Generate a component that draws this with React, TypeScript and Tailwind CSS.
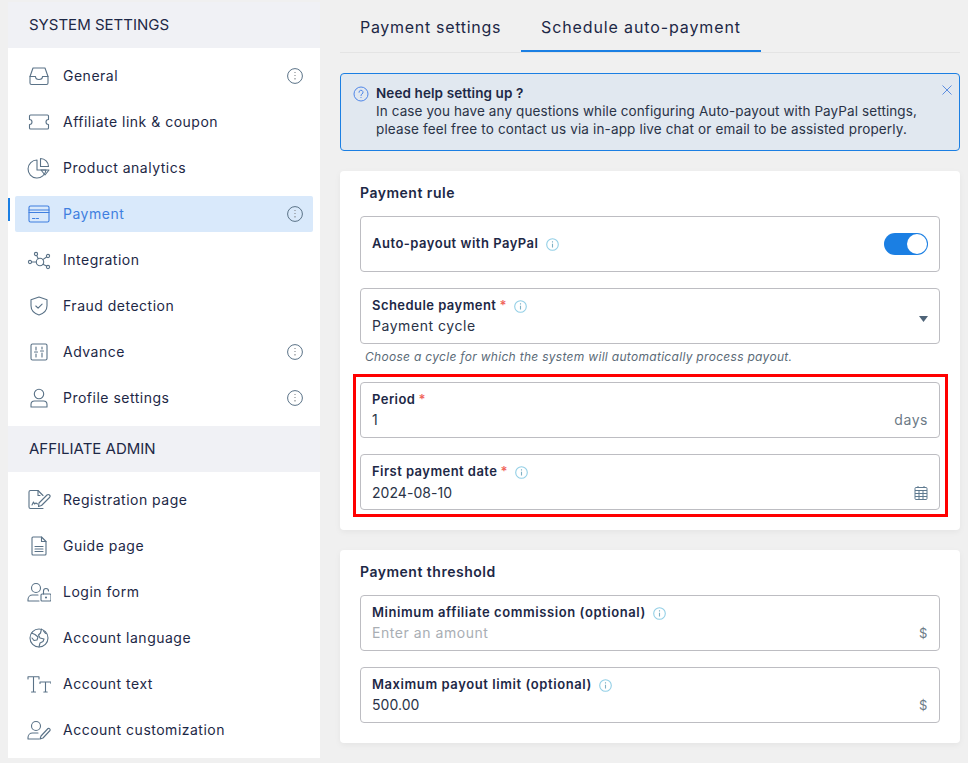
import type { ReactNode } from "react";

const Stroke = ({ children }: { children: ReactNode }) => (
  <svg width="24" height="24" viewBox="0 0 24 24" fill="none" stroke="#5a7287" strokeWidth="1.1" strokeLinecap="round" strokeLinejoin="round">
    {children}
  </svg>
);

const icons: Record<string, ReactNode> = {
  general: (
    <Stroke>
      <path d="M6 4h12l3 8.500v6.500a1.500 1.500 0 0 1-1.500 1.500h-15A1.500 1.500 0 0 1 3 19v-6.500z" />
      <path d="M3 12.500h5.500a3.500 3 0 0 0 7 0H21" />
    </Stroke>
  ),
  coupon: (
    <Stroke>
      <path d="M3.500 5h17a1 1 0 0 1 1 1v3.500a2.500 2.500 0 0 0 0 5V18a1 1 0 0 1-1 1h-17a1 1 0 0 1-1-1v-3.500a2.500 2.500 0 0 0 0-5V6a1 1 0 0 1 1-1z" />
    </Stroke>
  ),
  analytics: (
    <Stroke>
      <path d="M10 4a9 9 0 1 0 9 10h-9z" />
      <path d="M13.500 2.500a8 8 0 0 1 8 8h-8z" />
      <path d="M14 14h8l-4 5z" />
    </Stroke>
  ),
  payment: (
    <svg width="24" height="24" viewBox="0 0 24 24" fill="none" stroke="#3f7fe0" strokeWidth="1.1" strokeLinecap="round">
      <rect x="2" y="4" width="20" height="16" rx="1.500" />
      <path d="M2 8h20M2 10.500h20M5.500 16.500H8M9.500 16.500h2" />
    </svg>
  ),
  integration: (
    <Stroke>
      <circle cx="13" cy="14" r="3.700" />
      <circle cx="9" cy="6" r="1.600" />
      <circle cx="21" cy="8" r="1.600" />
      <circle cx="3" cy="14" r="1.600" />
      <circle cx="21" cy="19" r="1.600" />
      <path d="M4.600 14h4.700M9.700 7.500l1.500 3.300M19.600 9l-3.800 2.600M19.600 18l-3.800-1.800" />
    </Stroke>
  ),
  fraud: (
    <Stroke>
      <path d="M12 3l8 2.800v6c0 4.500-3.400 7.700-8 9.200-4.600-1.500-8-4.700-8-9.200v-6z" />
      <path d="M8.800 12l2.300 2.200 4-4" />
    </Stroke>
  ),
  advance: (
    <Stroke>
      <rect x="4" y="4" width="16" height="16" rx="1.500" />
      <path d="M9 7v3M9 14v3M7.500 12h3M15 7v2M15 13v4M13.500 11h3" />
    </Stroke>
  ),
  profile: (
    <Stroke>
      <circle cx="12" cy="8" r="4.700" />
      <path d="M4 21v-2.500a3.500 3.500 0 0 1 3.500-3.500h9a3.500 3.500 0 0 1 3.500 3.500V21z" />
    </Stroke>
  ),
  registration: (
    <Stroke>
      <path d="M16 20.500H3.500A1.500 1.500 0 0 1 2 19V4a1.500 1.500 0 0 1 1.500-1.500H11l5 5" />
      <path d="M11 2.500v5h2" />
      <path d="M5 17l1.500-3 1 2 1.500-1 1.500 1" />
      <path d="M12 15l8-8a1.500 1.500 0 0 1 2.500 2.500l-8 8-3 1z" />
    </Stroke>
  ),
  guide: (
    <Stroke>
      <path d="M6 3h8.500L19 7.500V20a1 1 0 0 1-1 1H6a1 1 0 0 1-1-1V4a1 1 0 0 1 1-1z" />
      <path d="M14.500 3v4.500H19" />
      <path d="M8 12.500h8M8 15h8M8 17.500h8" />
    </Stroke>
  ),
  login: (
    <Stroke>
      <circle cx="9" cy="8" r="4.500" />
      <path d="M1 21v-1.500A4.500 4.500 0 0 1 5.500 15H11M1 21h11" />
      <rect x="14" y="14" width="10" height="7" rx="1" />
      <path d="M16.500 14v-3a2.500 2.500 0 0 1 5 0" />
      <circle cx="19" cy="17.500" r=".5" />
    </Stroke>
  ),
  language: (
    <Stroke>
      <circle cx="12" cy="12" r="9" />
      <path d="M4.500 7l3.500 1.500 3 2.500-1 3-3 .5-2-2.500M12 21l1-4 3-1.500 1-2.500-4-1-1.500-3 2-2 1-4M16.500 5l2 2.500" />
    </Stroke>
  ),
  text: (
    <Stroke>
      <path d="M1 7V4.700h11V7M6.500 4.700V20M4.500 20h4" />
      <path d="M13 11.500V10h11v1.500M18.500 10v10M16.800 20h3.400" />
    </Stroke>
  ),
  customization: (
    <Stroke>
      <circle cx="9" cy="8" r="4.500" />
      <path d="M1 21v-1.500A4.500 4.500 0 0 1 5.500 15H11M1 21h11" />
      <path d="M14 18l7-7.500a1.500 1.500 0 0 1 2 2L16 20l-3 1z" />
    </Stroke>
  ),
};

const InfoDots = () => (
  <svg width="16" height="16" viewBox="0 0 16 16" fill="none" className="shrink-0">
    <circle cx="8" cy="8" r="7.400" stroke="#5a7287" strokeWidth="1" />
    <path d="M8 4v1M8 7v1M8 10v1.500" stroke="#8b8f93" strokeWidth="1.200" />
  </svg>
);

const FieldInfo = () => (
  <svg width="13" height="13" viewBox="0 0 13 13" fill="none" className="shrink-0">
    <circle cx="6.500" cy="6.500" r="5.800" stroke="#93cfe6" strokeWidth="1.100" />
    <path d="M6.500 3.300v1.200M6.500 5.800v3.600" stroke="#7fb0c4" strokeWidth="1.100" />
  </svg>
);

const Item = ({ icon, label, info, active }: { icon: string; label: string; info?: boolean; active?: boolean }) => (
  <div className="relative h-[46px] flex items-center">
    {active && <div className="absolute left-0 top-[7px] w-[2px] h-[23px] bg-[#1b7fe3]" />}
    <div className={`flex items-center h-[36px] w-[298px] ml-[7px] pl-[12px] pr-[10px] rounded-[2px] ${active ? "bg-[#d9e9fb]" : ""}`}>
      <span className="w-[24px] flex justify-center shrink-0">{icons[icon]}</span>
      <span className={`ml-[12px] pb-[2px] text-[14px] tracking-[0.5px] grow ${active ? "text-[#3f7fe0]" : "text-[#1d2846]"}`}>{label}</span>
      {info && <InfoDots />}
    </div>
  </div>
);

const SectionHead = ({ label }: { label: string }) => (
  <div className="h-[46px] bg-[#f0f1f5] flex items-center pl-[21px] text-[15px] text-[#1d2846]">{label}</div>
);

const Req = () => <span className="text-[#f0655a] ml-[3px]">*</span>;

const Field = ({ label, req, info, value, muted, tight, wide, raise = "-mt-[4px]", suffix }: {
  label: string;
  req?: boolean;
  info?: boolean;
  value: string;
  muted?: boolean;
  tight?: boolean;
  wide?: boolean;
  raise?: string;
  suffix?: ReactNode;
}) => (
  <div className="h-[56px] rounded-[4px] border border-[#bdbdc2] bg-white px-[11px] pt-[7px] flex flex-col">
    <div className={`flex items-center h-[20px] text-[13px] font-semibold text-[#1d2846] ${wide ? "tracking-[0.58px]" : "tracking-[0.45px]"}`}>
      {label}
      {req && <Req />}
      {info && <span className="ml-[7px]"><FieldInfo /></span>}
    </div>
    <div className="flex items-center justify-between h-[22px] text-[14px] tracking-[0.55px]">
      <span className={`${raise} ${tight ? "tracking-[0.05px]" : ""} ${muted ? "text-[#a9aeb4]" : "text-[#2a3347]"}`}>{value}</span>
      {suffix}
    </div>
  </div>
);

const Calendar = () => (
  <svg width="14" height="16" viewBox="0 0 14 16" fill="none" stroke="#5f7a90" strokeWidth="1">
    <rect x="1" y="2.500" width="12" height="12" rx="1" />
    <path d="M1 5.500h12M1 8.500h12M1 11.500h12M5 5.500v9M9 5.500v9M4 1v2M10 1v2" />
  </svg>
);

const Card = ({ title, height, children }: { title: string; height: string; children: ReactNode }) => (
  <div className={`bg-white rounded-[4px] shadow-[0_2px_6px_rgba(0,0,0,0.05)] px-[20px] ${height}`}>
    <div className="h-[45px] pt-[11px] text-[14px] font-semibold tracking-[0.5px] text-[#1d2846]">{title}</div>
    {children}
  </div>
);

export default function App() {
  return (
    <div className="w-[968px] h-[763px] overflow-hidden bg-[#f0f0f0] flex font-['Inter','Liberation_Sans',sans-serif]">
      <aside className="ml-[8px] mt-[2px] w-[312px] h-[756px] bg-white shrink-0">
        <SectionHead label="SYSTEM SETTINGS" />
        <div className="pt-[5px] h-[378px]">
          <Item icon="general" label="General" info />
          <Item icon="coupon" label="Affiliate link & coupon" />
          <Item icon="analytics" label="Product analytics" />
          <Item icon="payment" label="Payment" info active />
          <Item icon="integration" label="Integration" />
          <Item icon="fraud" label="Fraud detection" />
          <Item icon="advance" label="Advance" info />
          <Item icon="profile" label="Profile settings" info />
        </div>
        <SectionHead label="AFFILIATE ADMIN" />
        <div className="pt-[5px]">
          <Item icon="registration" label="Registration page" />
          <Item icon="guide" label="Guide page" />
          <Item icon="login" label="Login form" />
          <Item icon="language" label="Account language" />
          <Item icon="text" label="Account text" />
          <Item icon="customization" label="Account customization" />
        </div>
      </aside>

      <main className="ml-[20px] w-[620px] relative">
        <div className="h-[53px] border-b border-[#e4e4e4] flex text-[16px] text-[#1d2846]">
          <div className="w-[181px] pl-[20px] pt-[15px] tracking-[0.7px]">Payment settings</div>
          <div className="w-[240px] h-[52px] pl-[20px] pt-[15px] border-b-2 border-[#1b7fe3] tracking-[0.88px]">Schedule auto-payment</div>
        </div>

        <div className="relative mt-[20px] h-[78px] rounded-[4px] border border-[#1b7fe3] bg-[#e1e8f0] pl-[12px] pt-[10px] flex gap-[7px] text-[13.500px] leading-[18px] text-[#2a3347]">
          <svg width="16" height="16" viewBox="0 0 16 16" fill="none" className="mt-[2px] shrink-0">
            <circle cx="8" cy="8" r="7" stroke="#4f86e8" strokeWidth="1" />
            <path d="M6 6.300a2 2 0 1 1 3 1.700c-.700.400-1 .800-1 1.500" stroke="#4f86e8" strokeWidth="1" strokeLinecap="round" />
            <circle cx="8" cy="11.500" r=".6" fill="#4f86e8" />
          </svg>
          <div className="tracking-[0.1px]">
            <div className="font-semibold text-[#1d2846]">Need help setting up ?</div>
            <div>In case you have any questions while configuring Auto-payout with PayPal settings,</div>
            <div className="tracking-[0.15px]">please feel free to contact us via in-app live chat or email to be assisted properly.</div>
          </div>
          <svg width="10" height="10" viewBox="0 0 10 10" stroke="#5b8de0" strokeWidth="1" className="absolute right-[7px] top-[11px]">
            <path d="M0.500 0.500l9 9M9.500 0.500l-9 9" />
          </svg>
        </div>

        <div className="mt-[20px]">
          <Card title="Payment rule" height="h-[359px]">
            <div className="h-[56px] rounded-[4px] border border-[#bdbdc2] px-[11px] flex items-center justify-between">
              <div className="flex items-center text-[13px] font-semibold tracking-[0.5px] text-[#1d2846]">
                Auto-payout with PayPal
                <span className="ml-[7px]"><FieldInfo /></span>
              </div>
              <div className="w-[44px] h-[22px] rounded-full bg-[#1b7fe3] flex justify-end items-center pr-[1px]">
                <div className="w-[20px] h-[20px] rounded-full bg-white" />
              </div>
            </div>
            <div className="mt-[16px]">
              <Field label="Schedule payment" req info value="Payment cycle" suffix={
                <svg width="9" height="6" viewBox="0 0 9 6" className="mb-[17px]"><path d="M0 0h9L4.500 6z" fill="#4f6478" /></svg>
              } />
            </div>
            <div className="h-[22px] pl-[5px] pt-[4px] text-[12px] italic tracking-[0.3px] text-[#5b6b78]">Choose a cycle for which the system will automatically process payout.</div>
            <div className="mt-[16px]">
              <Field label="Period" req value="1" suffix={<span className="-mt-[4px] text-[#6c7a86]">days</span>} />
            </div>
            <div className="mt-[16px]">
              <Field label="First payment date" req info value="2024-08-10" tight raise="-mt-[2px]" suffix={<Calendar />} />
            </div>
          </Card>
        </div>

        <div className="mt-[20px]">
          <Card title="Payment threshold" height="h-[193px]">
            <Field label="Minimum affiliate commission (optional)" info wide value="Enter an amount" muted suffix={<span className="text-[#6c7a86] text-[13px]">$</span>} />
            <div className="mt-[16px]">
              <Field label="Maximum payout limit (optional)" info wide value="500.00" tight suffix={<span className="text-[#6c7a86] text-[13px]">$</span>} />
            </div>
          </Card>
        </div>

        {/* annotation box over the two fields */}
        <div className="absolute left-[13px] top-[374px] w-[595px] h-[143px] border-[3px] border-[#ff0000]" />
      </main>
    </div>
  );
}
